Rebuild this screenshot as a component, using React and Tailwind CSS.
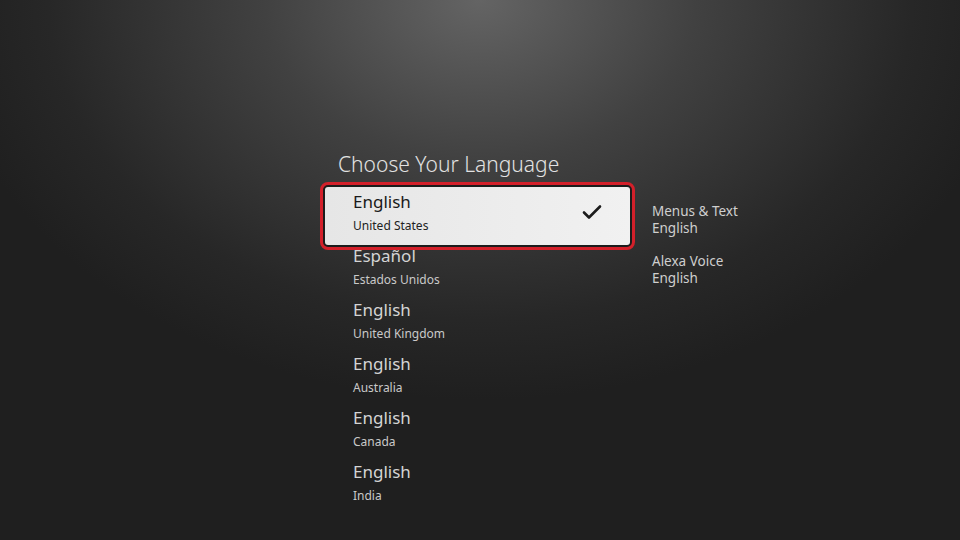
const languages = [
  { name: 'English', region: 'United States', selected: true },
  { name: 'Español', region: 'Estados Unidos' },
  { name: 'English', region: 'United Kingdom' },
  { name: 'English', region: 'Australia' },
  { name: 'English', region: 'Canada' },
  { name: 'English', region: 'India' },
];

const CheckMark = () => (
  <svg width="20" height="16" viewBox="0 0 20 16" className="text-[#1c1c1c]">
    <path d="M2 8.5 L7 13.5 L18 2.5" fill="none" stroke="currentColor" strokeWidth="2.6" strokeLinecap="round" strokeLinejoin="round" />
  </svg>
);

const Row = ({ item }) => {
  if (item.selected) {
    return (
      <li className="-mx-[6px] -my-[7px] rounded-[8px] border-[3px] border-[#d3202a] bg-[#1c1c1c] p-[2px]">
        <div className="flex h-[58px] items-start rounded-[3px] bg-gradient-to-r from-[#e6e6e6] to-[#f1f1f1] pl-[28px] pr-[28px] pt-[5px]">
          <div className="flex flex-col gap-[4px]">
            <span className="text-[17px] leading-[20px] text-[#1a1a1a]">{item.name}</span>
            <span className="text-[12px] leading-[20px] text-[#222]">{item.region}</span>
          </div>
          <div className="ml-auto mt-[12px]">
            <CheckMark />
          </div>
        </div>
      </li>
    );
  }
  return (
    <li className="flex h-[54px] flex-col gap-[4px] pl-[27px] pt-[3px]">
      <span className="text-[17px] leading-[20px] text-[#d4d4d4]">{item.name}</span>
      <span className="text-[12px] leading-[20px] text-[#c9c9c9]">{item.region}</span>
    </li>
  );
};

export default function App() {
  return (
    <div className="h-[540px] w-[960px] overflow-hidden bg-[#1f1f1f] bg-[radial-gradient(ellipse_540px_400px_at_50%_0%,#646464_0%,#414141_40%,#272727_80%,#1f1f1f_100%)] pt-[150px] font-['Noto_Sans',sans-serif]">
      <div className="ml-[326px]">
        <h1 className="ml-[12px] text-[21px] font-light leading-[28px] text-[#e2e2e2]">Choose Your Language</h1>
        <div className="mt-[11px] flex">
          <ul className="w-[303px]">
            {languages.map((item, i) => (
              <Row key={i} item={item} />
            ))}
          </ul>
          <aside className="ml-[23px] mt-[14px] flex flex-col gap-[16px] text-[13.5px] leading-[17px] text-[#cfcfcf]">
            <div className="flex flex-col">
              <span>Menus &amp; Text</span>
              <span>English</span>
            </div>
            <div className="flex flex-col">
              <span>Alexa Voice</span>
              <span>English</span>
            </div>
          </aside>
        </div>
      </div>
    </div>
  );
}
